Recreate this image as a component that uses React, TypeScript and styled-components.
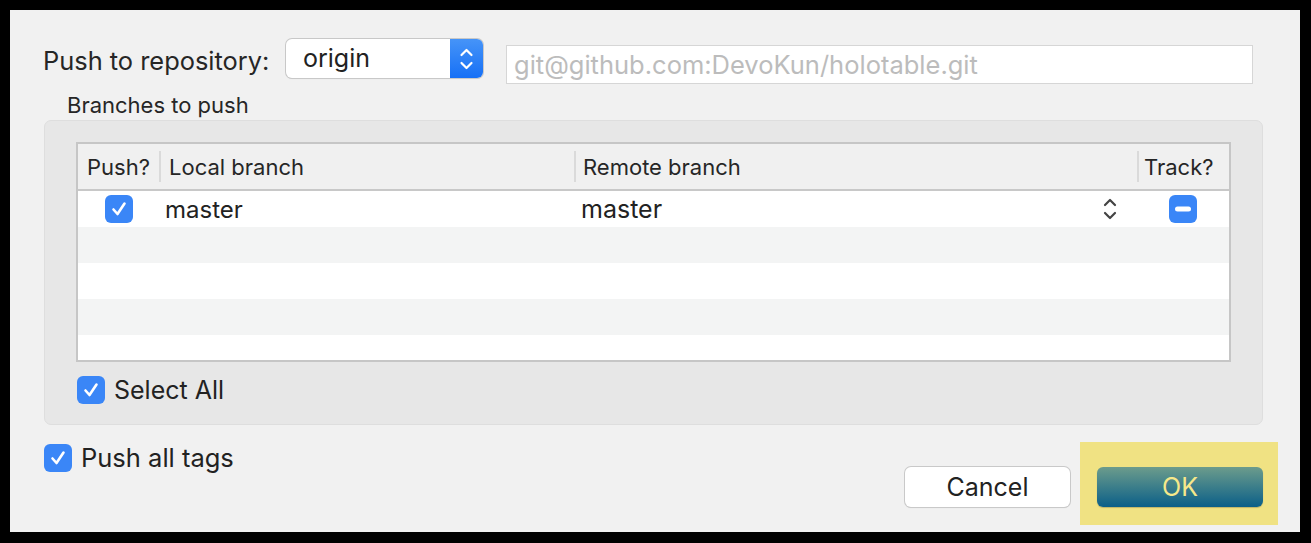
import React from "react";
import styled, { createGlobalStyle } from "styled-components";

const Global = createGlobalStyle`
  html, body { margin: 0; padding: 0; background: #000; }
  body { font-family: Inter, "Noto Sans", sans-serif; color: #222; }
  #root { width: 1311px; height: 543px; }
`;

const Frame = styled.div`
  width: 1311px;
  height: 543px;
  background: #000;
  padding: 10px 11px 11px 10px;
  box-sizing: border-box;
`;

const Dialog = styled.div`
  width: 100%;
  height: 100%;
  background: #f1f1f1;
  box-sizing: border-box;
  padding: 29px 37px 0 34px;
  display: flex;
  flex-direction: column;
`;

const RepoRow = styled.div`
  display: flex;
  align-items: flex-start;
  height: 40px;
`;

const RepoLabel = styled.span`
  flex: none;
  width: 243px;
  font-size: 25.4px;
  margin: 9px 0 0 -1px;
  line-height: 26px;
  color: #262626;
  white-space: nowrap;
`;

const Select = styled.div`
  display: flex;
  flex: none;
  width: 197px;
  height: 39px;
  border-radius: 6px;
  box-shadow: 0 0 0 1px #c8c8c8, 0 1px 1px rgba(0,0,0,0.12);
  overflow: hidden;
  background: #fff;
`;

const SelectText = styled.div`
  flex: 1;
  padding-left: 17px;
  font-size: 25px;
  line-height: 38px;
  color: #222;
`;

const SelectStepper = styled.div`
  width: 33px;
  background: linear-gradient(#4694f8, #1670f6);
  display: flex;
  align-items: center;
  justify-content: center;
`;

const Field = styled.div`
  flex: none;
  margin: 6px 0 0 23px;
  width: 747px;
  height: 39px;
  box-sizing: border-box;
  background: #fff;
  border: 1px solid #d6d6d6;
  padding-left: 7px;
  font-size: 25.5px;
  line-height: 37px;
  color: #bcbcbc;
  white-space: nowrap;
`;

const GroupLabel = styled.div`
  font-size: 22px;
  line-height: 24px;
  margin: 14px 0 3px 23px;
  color: #262626;
`;

const Panel = styled.div`
  width: 1219px;
  height: 305px;
  box-sizing: border-box;
  background: #e7e7e7;
  border: 1px solid #dedede;
  border-radius: 7px;
  padding: 21px 31px 0 31px;
  display: flex;
  flex-direction: column;
`;

const Table = styled.div`
  height: 220px;
  box-sizing: border-box;
  border: 2px solid #c6c6c6;
  background: #fff;
  overflow: hidden;
  display: flex;
  flex-direction: column;
`;

const COLS = "81px 415px 563px 1fr";

const HeaderRow = styled.div`
  display: grid;
  grid-template-columns: ${COLS};
  height: 45px;
  flex: none;
  background: #f0f0f0;
  border-bottom: 2px solid #c8c8c8;
`;

const HeaderCell = styled.div<{ $pad: number; $sep?: boolean }>`
  display: flex;
  align-items: center;
  padding-left: ${(p) => p.$pad}px;
  font-size: 22px;
  color: #262626;
  white-space: nowrap;
  border-left: ${(p) => (p.$sep ? "2px solid #dadada" : "none")};
  margin: ${(p) => (p.$sep ? "7px 0" : "0")};
`;

const BodyRow = styled.div<{ $alt: boolean }>`
  display: grid;
  grid-template-columns: ${COLS};
  height: 36px;
  flex: none;
  background: ${(p) => (p.$alt ? "#f3f4f4" : "#fff")};
`;

const Cell = styled.div<{ $center?: boolean; $pad?: number; $size?: number }>`
  display: flex;
  align-items: center;
  justify-content: ${(p) => (p.$center ? "center" : "flex-start")};
  padding-left: ${(p) => p.$pad ?? 0}px;
  font-size: ${(p) => p.$size ?? 24}px;
  color: #222;
`;

const RemoteCell = styled(Cell)`
  justify-content: space-between;
  padding-right: 20px;
`;

const Box = styled.div`
  width: 28px;
  height: 28px;
  border-radius: 6px;
  background: #3a86f7;
  display: flex;
  align-items: center;
  justify-content: center;
  flex: none;
`;

const CheckRow = styled.label<{ $size: number }>`
  display: flex;
  align-items: center;
  gap: 9px;
  font-size: ${(p) => p.$size}px;
  color: #222;
  white-space: nowrap;
`;

const SelectAllRow = styled(CheckRow)`
  margin-top: 13px;
  margin-left: 1px;
`;

const Footer = styled.div`
  display: flex;
  align-items: flex-start;
  margin-top: 17px;
  margin-right: -15px;
`;

const Spacer = styled.div`
  flex: 1;
`;

const CancelButton = styled.div`
  margin-top: 25px;
  width: 165px;
  height: 40px;
  box-sizing: border-box;
  background: #fff;
  border-radius: 6px;
  box-shadow: 0 0 0 1px #c9c9c9, 0 1px 1px rgba(0,0,0,0.15);
  display: flex;
  align-items: center;
  justify-content: center;
  font-size: 25px;
  color: #222;
`;

const Highlight = styled.div`
  margin-left: 10px;
  background: #f0e283;
  padding: 25px 15px 18px 17px;
`;

const OkButton = styled.div`
  width: 166px;
  height: 40px;
  border-radius: 6px;
  background: linear-gradient(#6c9c8c, #0b5f88);
  box-shadow: 0 1px 1px rgba(0,0,0,0.2);
  display: flex;
  align-items: center;
  justify-content: center;
  font-size: 25px;
  color: #f6e88a;
`;

const Check = () => (
  <svg width="18" height="18" viewBox="0 0 18 18">
    <path d="M3.5 9.5 L7.5 14 L14.5 3.5" fill="none" stroke="#fff" strokeWidth="2.6" strokeLinecap="round" strokeLinejoin="round" />
  </svg>
);

const Checkbox = () => (
  <Box>
    <Check />
  </Box>
);

const Minus = () => (
  <Box>
    <svg width="18" height="6" viewBox="0 0 18 6">
      <rect x="1" y="0.5" width="16" height="5" rx="2.5" fill="#fff" />
    </svg>
  </Box>
);

const Chevrons = ({ color, w }: { color: string; w: number }) => (
  <svg width={w} height="24" viewBox="0 0 14 24">
    <path d="M2 8 L7 3 L12 8" fill="none" stroke={color} strokeWidth="2.2" strokeLinecap="round" strokeLinejoin="round" />
    <path d="M2 16 L7 21 L12 16" fill="none" stroke={color} strokeWidth="2.2" strokeLinecap="round" strokeLinejoin="round" />
  </svg>
);

export default function App() {
  const emptyRows = [true, false, true, false];
  return (
    <>
      <Global />
      <Frame>
        <Dialog>
          <RepoRow>
            <RepoLabel>Push to repository:</RepoLabel>
            <Select>
              <SelectText>origin</SelectText>
              <SelectStepper>
                <Chevrons color="#fff" w={15} />
              </SelectStepper>
            </Select>
            <Field>git@github.com:DevoKun/holotable.git</Field>
          </RepoRow>
          <GroupLabel>Branches to push</GroupLabel>
          <Panel>
            <Table>
              <HeaderRow>
                <HeaderCell $pad={9}>Push?</HeaderCell>
                <HeaderCell $pad={8} $sep>Local branch</HeaderCell>
                <HeaderCell $pad={7} $sep>Remote branch</HeaderCell>
                <HeaderCell $pad={5} $sep>Track?</HeaderCell>
              </HeaderRow>
              <BodyRow $alt={false}>
                <Cell $center>
                  <Checkbox />
                </Cell>
                <Cell $pad={6}>master</Cell>
                <RemoteCell $pad={7} $size={25}>
                  master
                  <Chevrons color="#444" w={14} />
                </RemoteCell>
                <Cell $center>
                  <Minus />
                </Cell>
              </BodyRow>
              {emptyRows.map((alt, i) => (
                <BodyRow key={i} $alt={alt} />
              ))}
            </Table>
            <SelectAllRow $size={25}>
              <Checkbox />
              Select All
            </SelectAllRow>
          </Panel>
          <Footer>
            <CheckRow $size={25.5}>
              <Checkbox />
              Push all tags
            </CheckRow>
            <Spacer />
            <CancelButton>Cancel</CancelButton>
            <Highlight>
              <OkButton>OK</OkButton>
            </Highlight>
          </Footer>
        </Dialog>
      </Frame>
    </>
  );
}
